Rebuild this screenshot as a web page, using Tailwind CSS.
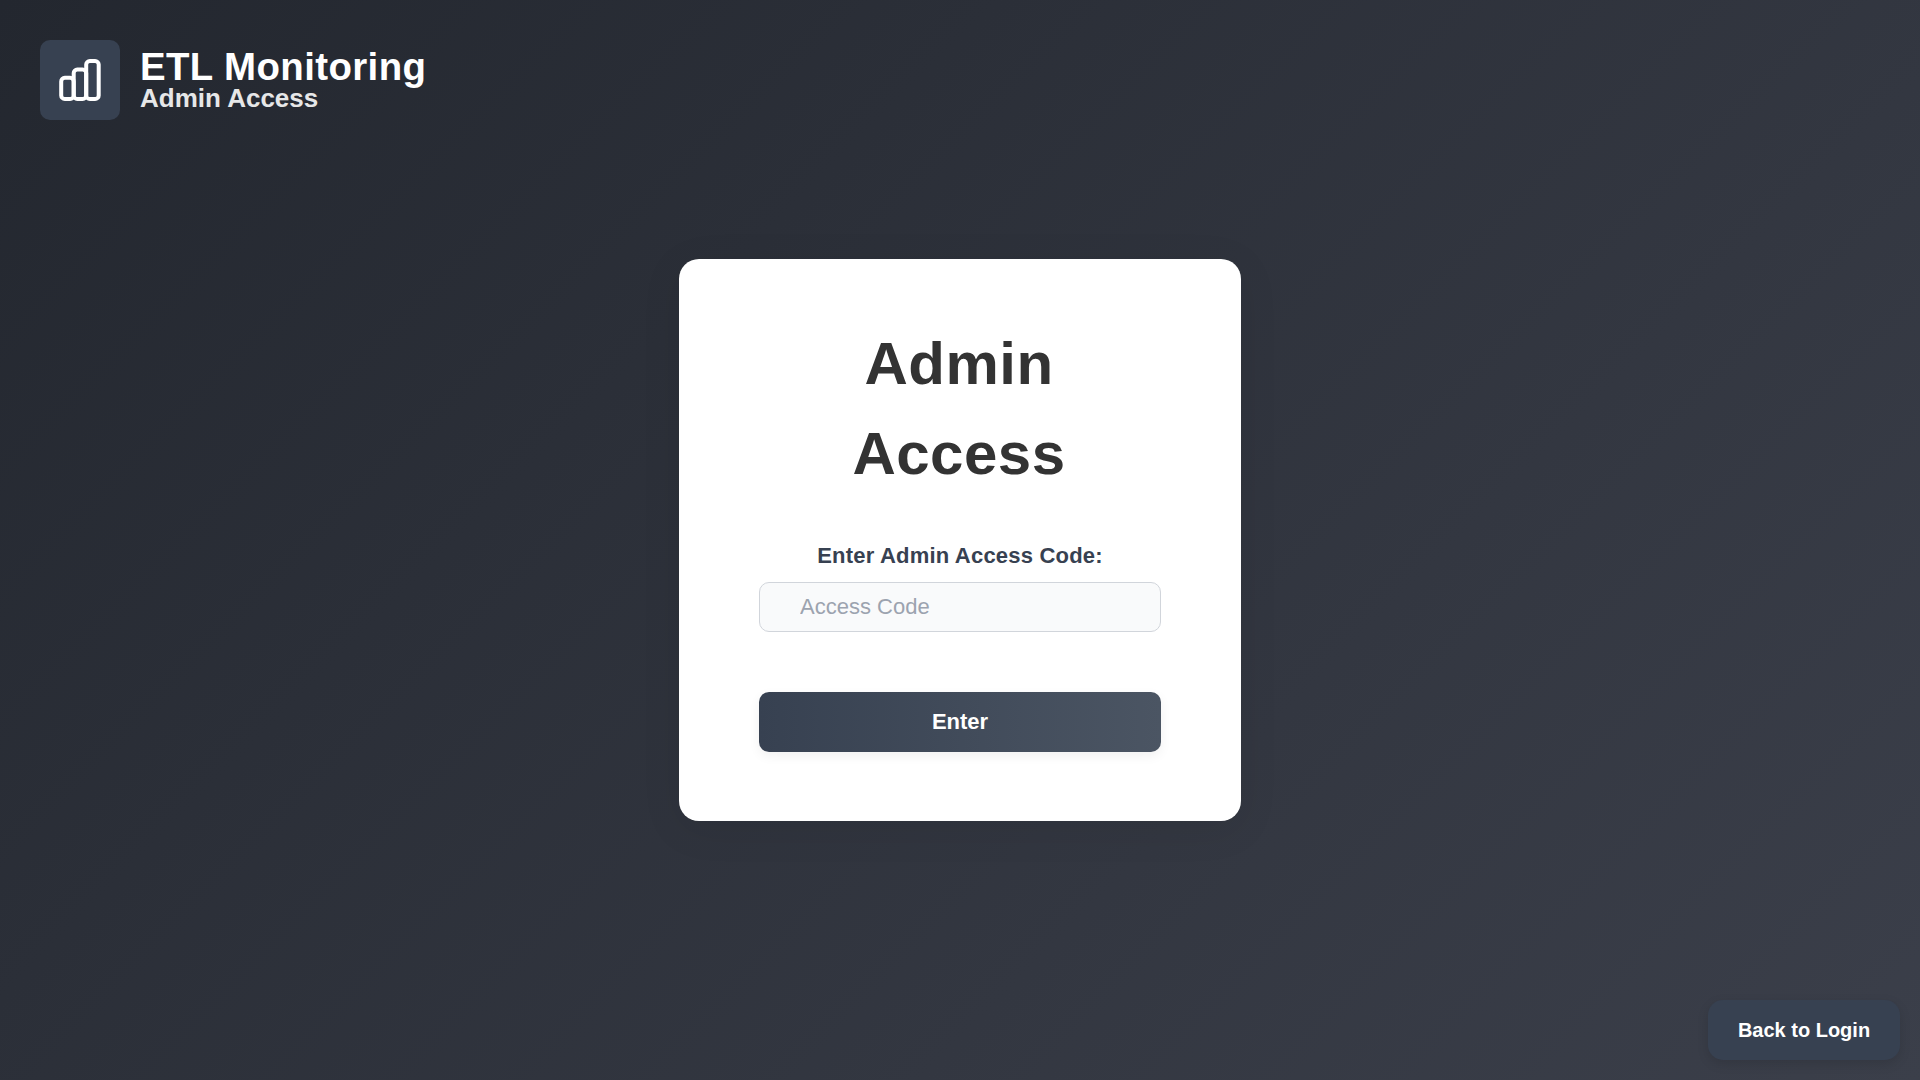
<!DOCTYPE html>
<html lang="en"><head><meta charset="utf-8"><title>ETL Monitoring</title>
<script src="https://cdn.jsdelivr.net/npm/@tailwindcss/browser@4"></script></head>
<body class="font-['Liberation_Sans',Arial,sans-serif] h-screen overflow-hidden bg-linear-[135deg,#23272f_0%,#3b3f4a_100%] flex flex-col relative">
<header class="absolute top-10 left-10 flex items-center gap-5">
<div class="size-20 rounded-[10px] bg-[#374151] flex items-center justify-center">
<svg class="size-12" viewBox="0 0 24 24" fill="none" stroke="#fff" stroke-width="2" stroke-linecap="round" stroke-linejoin="round"><rect x="2.6" y="10.9" width="6.25" height="10.6" rx="1.8"/><rect x="8.85" y="6.75" width="6.25" height="14.75" rx="1.8"/><rect x="15.1" y="2.5" width="6.25" height="19" rx="1.8"/></svg>
</div>
<div class="font-bold pb-0.5"><h1 class="text-[38.4px] leading-[38px] text-white tracking-[0.4px]">ETL Monitoring</h1><p class="text-[26px] leading-[25px] text-[#e6e7e8]">Admin Access</p></div>
</header>
<main class="flex-1 flex items-center justify-center">
<section class="w-[562px] h-[562px] bg-white rounded-[20px] px-20 pt-[60px] flex flex-col shadow-[0_8px_40px_rgba(0,0,0,0.08)]">
<h2 class="text-[60px] leading-[90px] font-bold text-center text-[#333] tracking-[0.5px] pr-0.5">Admin<br>Access</h2>
<label class="mt-[40px] text-center font-bold text-[22px] leading-[33px] text-[#374151] tracking-[0.2px]">Enter Admin Access Code:</label>
<input placeholder="Access Code" class="mt-2.5 h-[50px] rounded-[10px] border border-[#d1d5db] bg-[#f9fafb] px-10 pb-px text-[22px] placeholder:text-[#9ca3af]">
<button class="mt-[60px] h-[60px] rounded-[10px] bg-linear-to-r from-[#374151] to-[#4b5563] text-white font-bold text-[22px] pb-0.5 shadow-[0_4px_12px_rgba(0,0,0,0.06)]">Enter</button>
</section></main>
<button class="absolute right-5 bottom-5 h-[60px] w-[192px] rounded-[15px] bg-[#374151] text-white font-bold text-[20px] shadow-[0_4px_12px_rgba(0,0,0,0.12)]">Back to Login</button>
</body></html>
